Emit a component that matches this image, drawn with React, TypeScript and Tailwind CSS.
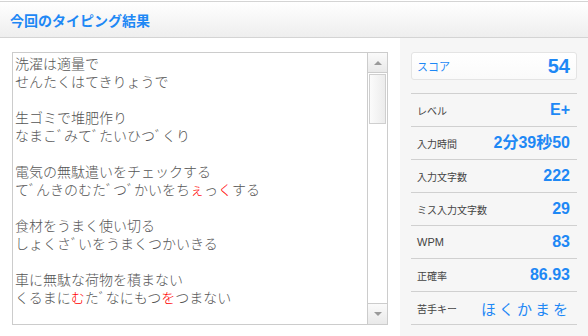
import React from 'react';

const jp = { fontFamily: '"Noto Sans CJK JP", "Liberation Sans", sans-serif' };
const num = { fontFamily: '"Liberation Sans", "Noto Sans CJK JP", sans-serif' };

type Seg = string | { red: string };

const lines: Seg[][] = [
  ['洗濯は適量で'],
  ['せんたくはてきりょうで'],
  [],
  ['生ゴミで堆肥作り'],
  ['なまこﾞみてﾞたいひつﾞくり'],
  [],
  ['電気の無駄遣いをチェックする'],
  ['てﾞんきのむたﾞつﾞかいをち', { red: 'ぇ' }, 'っ', { red: 'く' }, 'する'],
  [],
  ['食材をうまく使い切る'],
  ['しょくさﾞいをうまくつかいきる'],
  [],
  ['車に無駄な荷物を積まない'],
  ['くるまに', { red: 'む' }, 'たﾞなにもつ', { red: 'を' }, 'つまない'],
];

const rows = [
  { label: 'レベル', value: 'E+' },
  { label: '入力時間', value: '2分39秒50' },
  { label: '入力文字数', value: '222' },
  { label: 'ミス入力文字数', value: '29' },
  { label: 'WPM', value: '83' },
  { label: '正確率', value: '86.93' },
];

const Scrollbar = () => (
  <div className="w-[20px] flex flex-col border-l border-[#cccccc] bg-white">
    <div className="h-[20px] border-b border-[#cccccc] bg-gradient-to-b from-[#fafafa] to-[#e9e9e9] flex items-center justify-center">
      <div className="w-0 h-0 border-l-[4px] border-r-[4px] border-b-[4px] border-l-transparent border-r-transparent border-b-[#9a9a9a]" />
    </div>
    <div className="flex-1 px-px pt-[1px]">
      <div className="h-[50px] border border-[#cfcfcf] bg-gradient-to-r from-[#fbfbfb] to-[#ececec]" />
    </div>
    <div className="h-[21px] border-t border-[#cccccc] bg-gradient-to-b from-[#fafafa] to-[#e9e9e9] flex items-center justify-center">
      <div className="w-0 h-0 border-l-[4px] border-r-[4px] border-t-[4px] border-l-transparent border-r-transparent border-t-[#9a9a9a]" />
    </div>
  </div>
);

export default function App() {
  return (
    <div className="w-[588px] h-[336px] overflow-hidden bg-white pt-px" style={jp}>
      {/* Header */}
      <div className="h-[37px] border-t border-b border-[#d4d4d4] bg-gradient-to-b from-white to-[#eeeeee] flex items-center pl-[10px]">
        <h1 className="text-[14px] font-bold text-[#1e88f5] leading-none">今回のタイピング結果</h1>
      </div>

      <div className="flex h-[298px]">
        {/* Typed text */}
        <div className="w-[400px] pl-[12px] pr-[12px] pt-[14px]">
          <div className="h-[273px] border border-[#cccccc] flex">
            <div className="flex-1 overflow-hidden pl-[2px] pt-px text-[14px] leading-[18px] text-[#555555] font-light whitespace-pre">
              {lines.map((segs, i) => (
                <div key={i} className="h-[18px]">
                  {segs.map((s, j) =>
                    typeof s === 'string' ? (
                      <span key={j}>{s}</span>
                    ) : (
                      <span key={j} className="text-[#ff0000]">{s.red}</span>
                    )
                  )}
                </div>
              ))}
            </div>
            <Scrollbar />
          </div>
        </div>

        {/* Results */}
        <div className="flex-1 bg-[#f6f6f6] pt-[14px] pl-[11px] pr-[11px]">
          <div className="h-[28px] rounded-[3px] border border-[#e4e4e4] bg-gradient-to-b from-white to-[#fafafa] flex items-center justify-between pl-[5px] pr-[6px]">
            <span className="text-[11px] text-[#1e88f5]">スコア</span>
            <span className="text-[20px] font-bold text-[#1e88f5] leading-none" style={num}>54</span>
          </div>
          <div className="mt-[13px] border-b border-[#d0d0d0]">
            {rows.map((r) => (
              <div key={r.label} className="h-[33px] border-t border-[#d0d0d0] flex items-center justify-between pl-[6px] pr-[7px]">
                <span className={r.label === 'WPM' ? 'text-[11px] text-[#444444]' : 'text-[10px] text-[#444444]'} style={r.label === 'WPM' ? num : undefined}>{r.label}</span>
                <span className="text-[16px] font-bold text-[#1e88f5] leading-none" style={num}>{r.value}</span>
              </div>
            ))}
            <div className="h-[33px] border-t border-[#d0d0d0] flex items-center justify-between pl-[6px] pr-[6px]">
              <span className="text-[10px] text-[#444444]">苦手キー</span>
              <span className="text-[15px] text-[#1e88f5] tracking-[3px] leading-none">ほくかまを</span>
            </div>
          </div>
        </div>
      </div>
    </div>
  );
}
